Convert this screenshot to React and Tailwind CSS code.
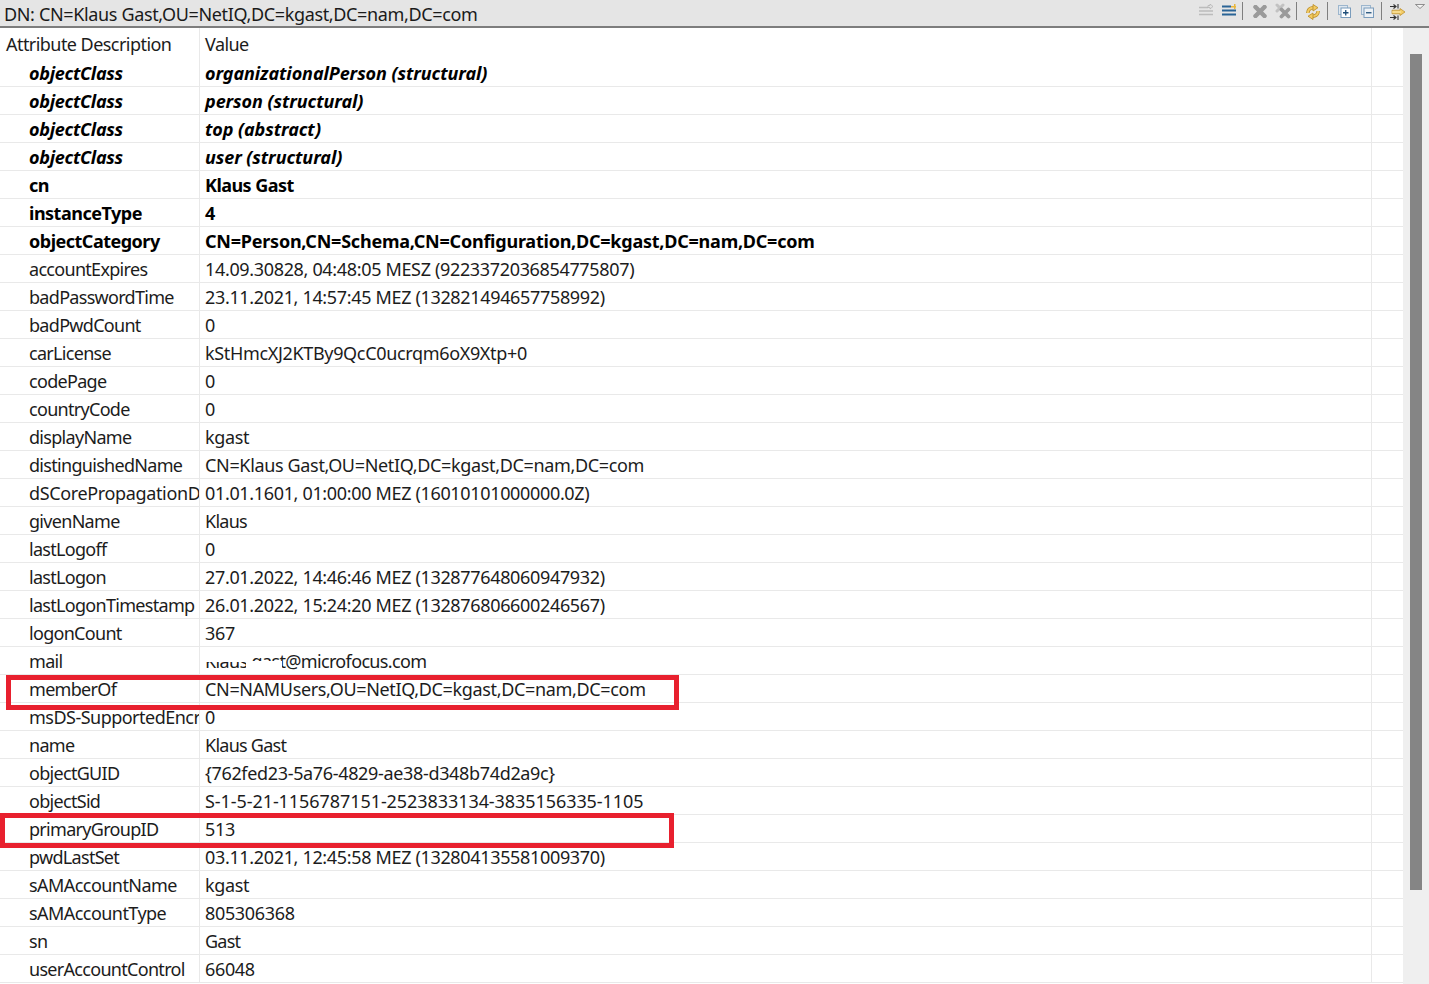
import React from 'react';

const rows = [
  ['objectClass', 'organizationalPerson (structural)', 'bi'],
  ['objectClass', 'person (structural)', 'bi'],
  ['objectClass', 'top (abstract)', 'bi'],
  ['objectClass', 'user (structural)', 'bi'],
  ['cn', 'Klaus Gast', 'b'],
  ['instanceType', '4', 'b'],
  ['objectCategory', 'CN=Person,CN=Schema,CN=Configuration,DC=kgast,DC=nam,DC=com', 'bl'],
  ['accountExpires', '14.09.30828, 04:48:05 MESZ (9223372036854775807)'],
  ['badPasswordTime', '23.11.2021, 14:57:45 MEZ (132821494657758992)'],
  ['badPwdCount', '0'],
  ['carLicense', 'kStHmcXJ2KTBy9QcC0ucrqm6oX9Xtp+0'],
  ['codePage', '0'],
  ['countryCode', '0'],
  ['displayName', 'kgast'],
  ['distinguishedName', 'CN=Klaus Gast,OU=NetIQ,DC=kgast,DC=nam,DC=com'],
  ['dSCorePropagationData', '01.01.1601, 01:00:00 MEZ (16010101000000.0Z)', 'cut'],
  ['givenName', 'Klaus', 'word'],
  ['lastLogoff', '0'],
  ['lastLogon', '27.01.2022, 14:46:46 MEZ (132877648060947932)'],
  ['lastLogonTimestamp', '26.01.2022, 15:24:20 MEZ (132876806600246567)'],
  ['logonCount', '367'],
  ['mail', 'Klaus.gast@microfocus.com', 'mail'],
  ['memberOf', 'CN=NAMUsers,OU=NetIQ,DC=kgast,DC=nam,DC=com'],
  ['msDS-SupportedEncryptionTypes', '0', 'cut2'],
  ['name', 'Klaus Gast', 'word'],
  ['objectGUID', '{762fed23-5a76-4829-ae38-d348b74d2a9c}'],
  ['objectSid', 'S-1-5-21-1156787151-2523833134-3835156335-1105', 'sid'],
  ['primaryGroupID', '513'],
  ['pwdLastSet', '03.11.2021, 12:45:58 MEZ (132804135581009370)'],
  ['sAMAccountName', 'kgast', 'sam'],
  ['sAMAccountType', '805306368', 'sam'],
  ['sn', 'Gast', 'word'],
  ['userAccountControl', '66048'],
];

const Sep = ({ className }) => <div className={`w-px h-[18px] mt-[2px] bg-[#7f7f7f] ${className}`} />;

// toolbar sits on top of the DN bar
const Toolbar = () => (
  <div className="absolute left-[1199px] top-0 h-[24px] flex items-start">
    <svg width="14" height="12" viewBox="0 0 14 12" className="mt-[4px]">
      <path d="M0 3.500h9M0 7h14M0 10.500h14" stroke="#bcbcbc" strokeWidth="1.700" />
      <path d="M9 1.500h2V0l3 2.500L11 5V3.500H9z" fill="#e2e2e2" stroke="#a8a8a8" strokeWidth=".6" />
    </svg>
    <svg width="14" height="12" viewBox="0 0 14 12" className="ml-[9px] mt-[4px]">
      <path d="M0 2.500h9M0 6.500h14M0 10.500h14" stroke="#2a6496" strokeWidth="2" />
      <path d="M9 2h3V0h1.500v2H14v1.500h-.5V5H12V3.500H9z" fill="#e9b73c" />
    </svg>
    <Sep className="ml-[6px]" />
    <svg width="14" height="13" viewBox="0 0 14 13" className="ml-[10px] mt-[5px]">
      <path d="M2.500 2l9 9M11.500 2l-9 9" stroke="#9a9a9a" strokeWidth="4.500" strokeLinecap="round" />
    </svg>
    <svg width="16" height="16" viewBox="0 0 16 16" className="ml-[8px] mt-[3px]">
      <path d="M2 2l6 6M8 2L2 8" stroke="#c2c2c2" strokeWidth="3" strokeLinecap="round" />
      <path d="M6.500 6.500l7 7M13.500 6.500l-7 7" stroke="#9a9a9a" strokeWidth="3.800" strokeLinecap="round" />
    </svg>
    <Sep className="ml-[5px]" />
    <svg width="14" height="16" viewBox="0 0 14 16" fill="none" className="ml-[9px] mt-[4px]">
      <path d="M1.800 9C2 6 4 4 7 3.700" stroke="#b98a22" strokeWidth="3.400" />
      <path d="M1.800 9C2 6 4 4 7 3.700" stroke="#f3cb62" strokeWidth="2" />
      <path d="M7 .5l5 3.200-5 3.300z" fill="#f3cb62" stroke="#b98a22" strokeWidth=".8" />
      <path d="M12.200 7C12 10 10 12 7 12.300" stroke="#b98a22" strokeWidth="3.400" />
      <path d="M12.200 7C12 10 10 12 7 12.300" stroke="#f3cb62" strokeWidth="2" />
      <path d="M7 9l-5 3.200 5 3.300z" fill="#f3cb62" stroke="#b98a22" strokeWidth=".8" />
    </svg>
    <Sep className="ml-[7px]" />
    <svg width="13" height="13" viewBox="0 0 13 13" className="ml-[10px] mt-[5px]">
      <rect x=".5" y=".5" width="9" height="9" fill="#dfe7ef" stroke="#9db6cd" />
      <rect x="3" y="3" width="9.500" height="9.500" fill="#fff" stroke="#7a9cbc" />
      <path d="M7.750 5v5.500M5 7.750h5.500" stroke="#1f4e79" strokeWidth="1.300" />
    </svg>
    <svg width="13" height="13" viewBox="0 0 13 13" className="ml-[10px] mt-[5px]">
      <rect x=".5" y=".5" width="9" height="9" fill="#dfe7ef" stroke="#9db6cd" />
      <rect x="3" y="3" width="9.500" height="9.500" fill="#edf1f5" stroke="#7a9cbc" />
      <path d="M5 7.750h5.500" stroke="#1f4e79" strokeWidth="1.300" />
    </svg>
    <Sep className="ml-[7px]" />
    <svg width="16" height="16" viewBox="0 0 16 16" className="ml-[8px] mt-[4px]">
      <path d="M0 2.500h6M0 13.500h6" stroke="#333" strokeWidth="1.100" />
      <path d="M3.500.5l2.500 2-2.500 2M3.500 11.500l2.500 2-2.500 2M8 0v4.500M8 11.500V16" stroke="#333" fill="none" strokeWidth="1.100" />
      <path d="M2 6.200h8V4.500l5 3.500-5 3.500V9.800H2z" fill="#f4cd68" stroke="#b98a22" strokeWidth=".7" />
      <path d="M2 8h9" stroke="#fdf0c4" strokeWidth=".8" />
    </svg>
    <svg width="10" height="5" viewBox="0 0 10 5" className="ml-[9px] mt-[4px]">
      <path d="M.5.500h9L5 4.500z" fill="#f4f4f4" stroke="#777" strokeWidth=".8" />
    </svg>
  </div>
);

const attrStyle = (kind) => {
  if (kind === 'bi') return 'font-bold italic text-black tracking-[-0.28px]';
  if (kind === 'b' || kind === 'bl') return 'font-bold text-black tracking-[-0.5px]';
  if (kind === 'cut') return 'text-[#1c1c1c] tracking-[-0.36px]';
  if (kind === 'cut2') return 'text-[#1c1c1c] tracking-[-0.52px]';
  if (kind === 'sam') return 'text-[#1c1c1c] tracking-[-0.55px]';
  return 'text-[#1c1c1c] tracking-[-0.7px]';
};

const valueStyle = (kind) => {
  if (kind === 'bi') return 'font-bold italic text-black tracking-[-0.08px]';
  if (kind === 'b') return 'font-bold text-black tracking-[-0.55px]';
  if (kind === 'bl') return 'font-bold text-black tracking-[-0.23px]';
  if (kind === 'word') return 'text-[#1c1c1c] tracking-[-0.75px]';
  if (kind === 'mail') return 'text-[#1c1c1c] tracking-[-0.65px]';
  if (kind === 'sid') return 'text-[#1c1c1c] tracking-[-0.07px]';
  return 'text-[#1c1c1c] tracking-[-0.34px]';
};

const Row = ({ attr, value, kind }) => (
  <div className="flex h-[28px] border-b border-[#e9e9e9]">
    <div className={`w-[200px] shrink-0 pl-[29px] border-r border-[#e9e9e9] overflow-hidden whitespace-nowrap leading-[29px] ${attrStyle(kind)}`}>
      {attr}
    </div>
    <div className={`relative w-[1172px] shrink-0 pl-[5px] border-r border-[#e9e9e9] overflow-hidden whitespace-nowrap leading-[29px] ${valueStyle(kind)}`}>
      {value}
      {kind === 'mail' && (
        <>
          {/* name is scribbled out in the shot */}
          <div className="absolute left-[4px] top-[3px] w-[42px] h-[12px] bg-white" />
          <div className="absolute left-[46px] top-[3px] w-[6px] h-[24px] bg-white" />
          <div className="absolute left-[52px] top-[14px] w-[30px] h-[13px] bg-white" />
        </>
      )}
    </div>
    <div className="flex-1" />
  </div>
);

export default function App() {
  return (
    <div className="relative w-[1429px] h-[984px] overflow-hidden bg-white text-[18px] font-['Noto_Sans','Open_Sans',sans-serif] tracking-[-0.55px]">
      <div className="h-[28px] bg-[#e5e5e5] border-b-2 border-[#7d7d7d] pl-[4px] leading-[29px] tracking-[-0.35px] text-[#1a1a1a] whitespace-nowrap">
        DN: CN=Klaus Gast,OU=NetIQ,DC=kgast,DC=nam,DC=com
      </div>
      <Toolbar />

      <div className="flex h-[956px]">
        <div className="w-[1403px] shrink-0 overflow-hidden">
          <div className="flex h-[31px] text-[#1c1c1c]">
            <div className="w-[200px] shrink-0 pl-[6px] border-r border-[#e9e9e9] leading-[33px]">Attribute Description</div>
            <div className="w-[1172px] shrink-0 pl-[5px] border-r border-[#e9e9e9] leading-[33px]">Value</div>
          </div>
          {rows.map(([attr, value, kind], i) => (
            <Row key={i} attr={attr} value={value} kind={kind} />
          ))}
        </div>
        <div className="flex-1 bg-[#efefef] pl-[7px] pt-[26px]">
          <div className="w-[12px] h-[836px] bg-[#858585]" />
        </div>
      </div>

      <div className="absolute left-[6px] top-[675px] w-[673px] h-[35px] border-[5px] border-[#e8202e]" />
      <div className="absolute left-0 top-[813px] w-[674px] h-[35px] border-[5px] border-[#e8202e]" />
    </div>
  );
}
